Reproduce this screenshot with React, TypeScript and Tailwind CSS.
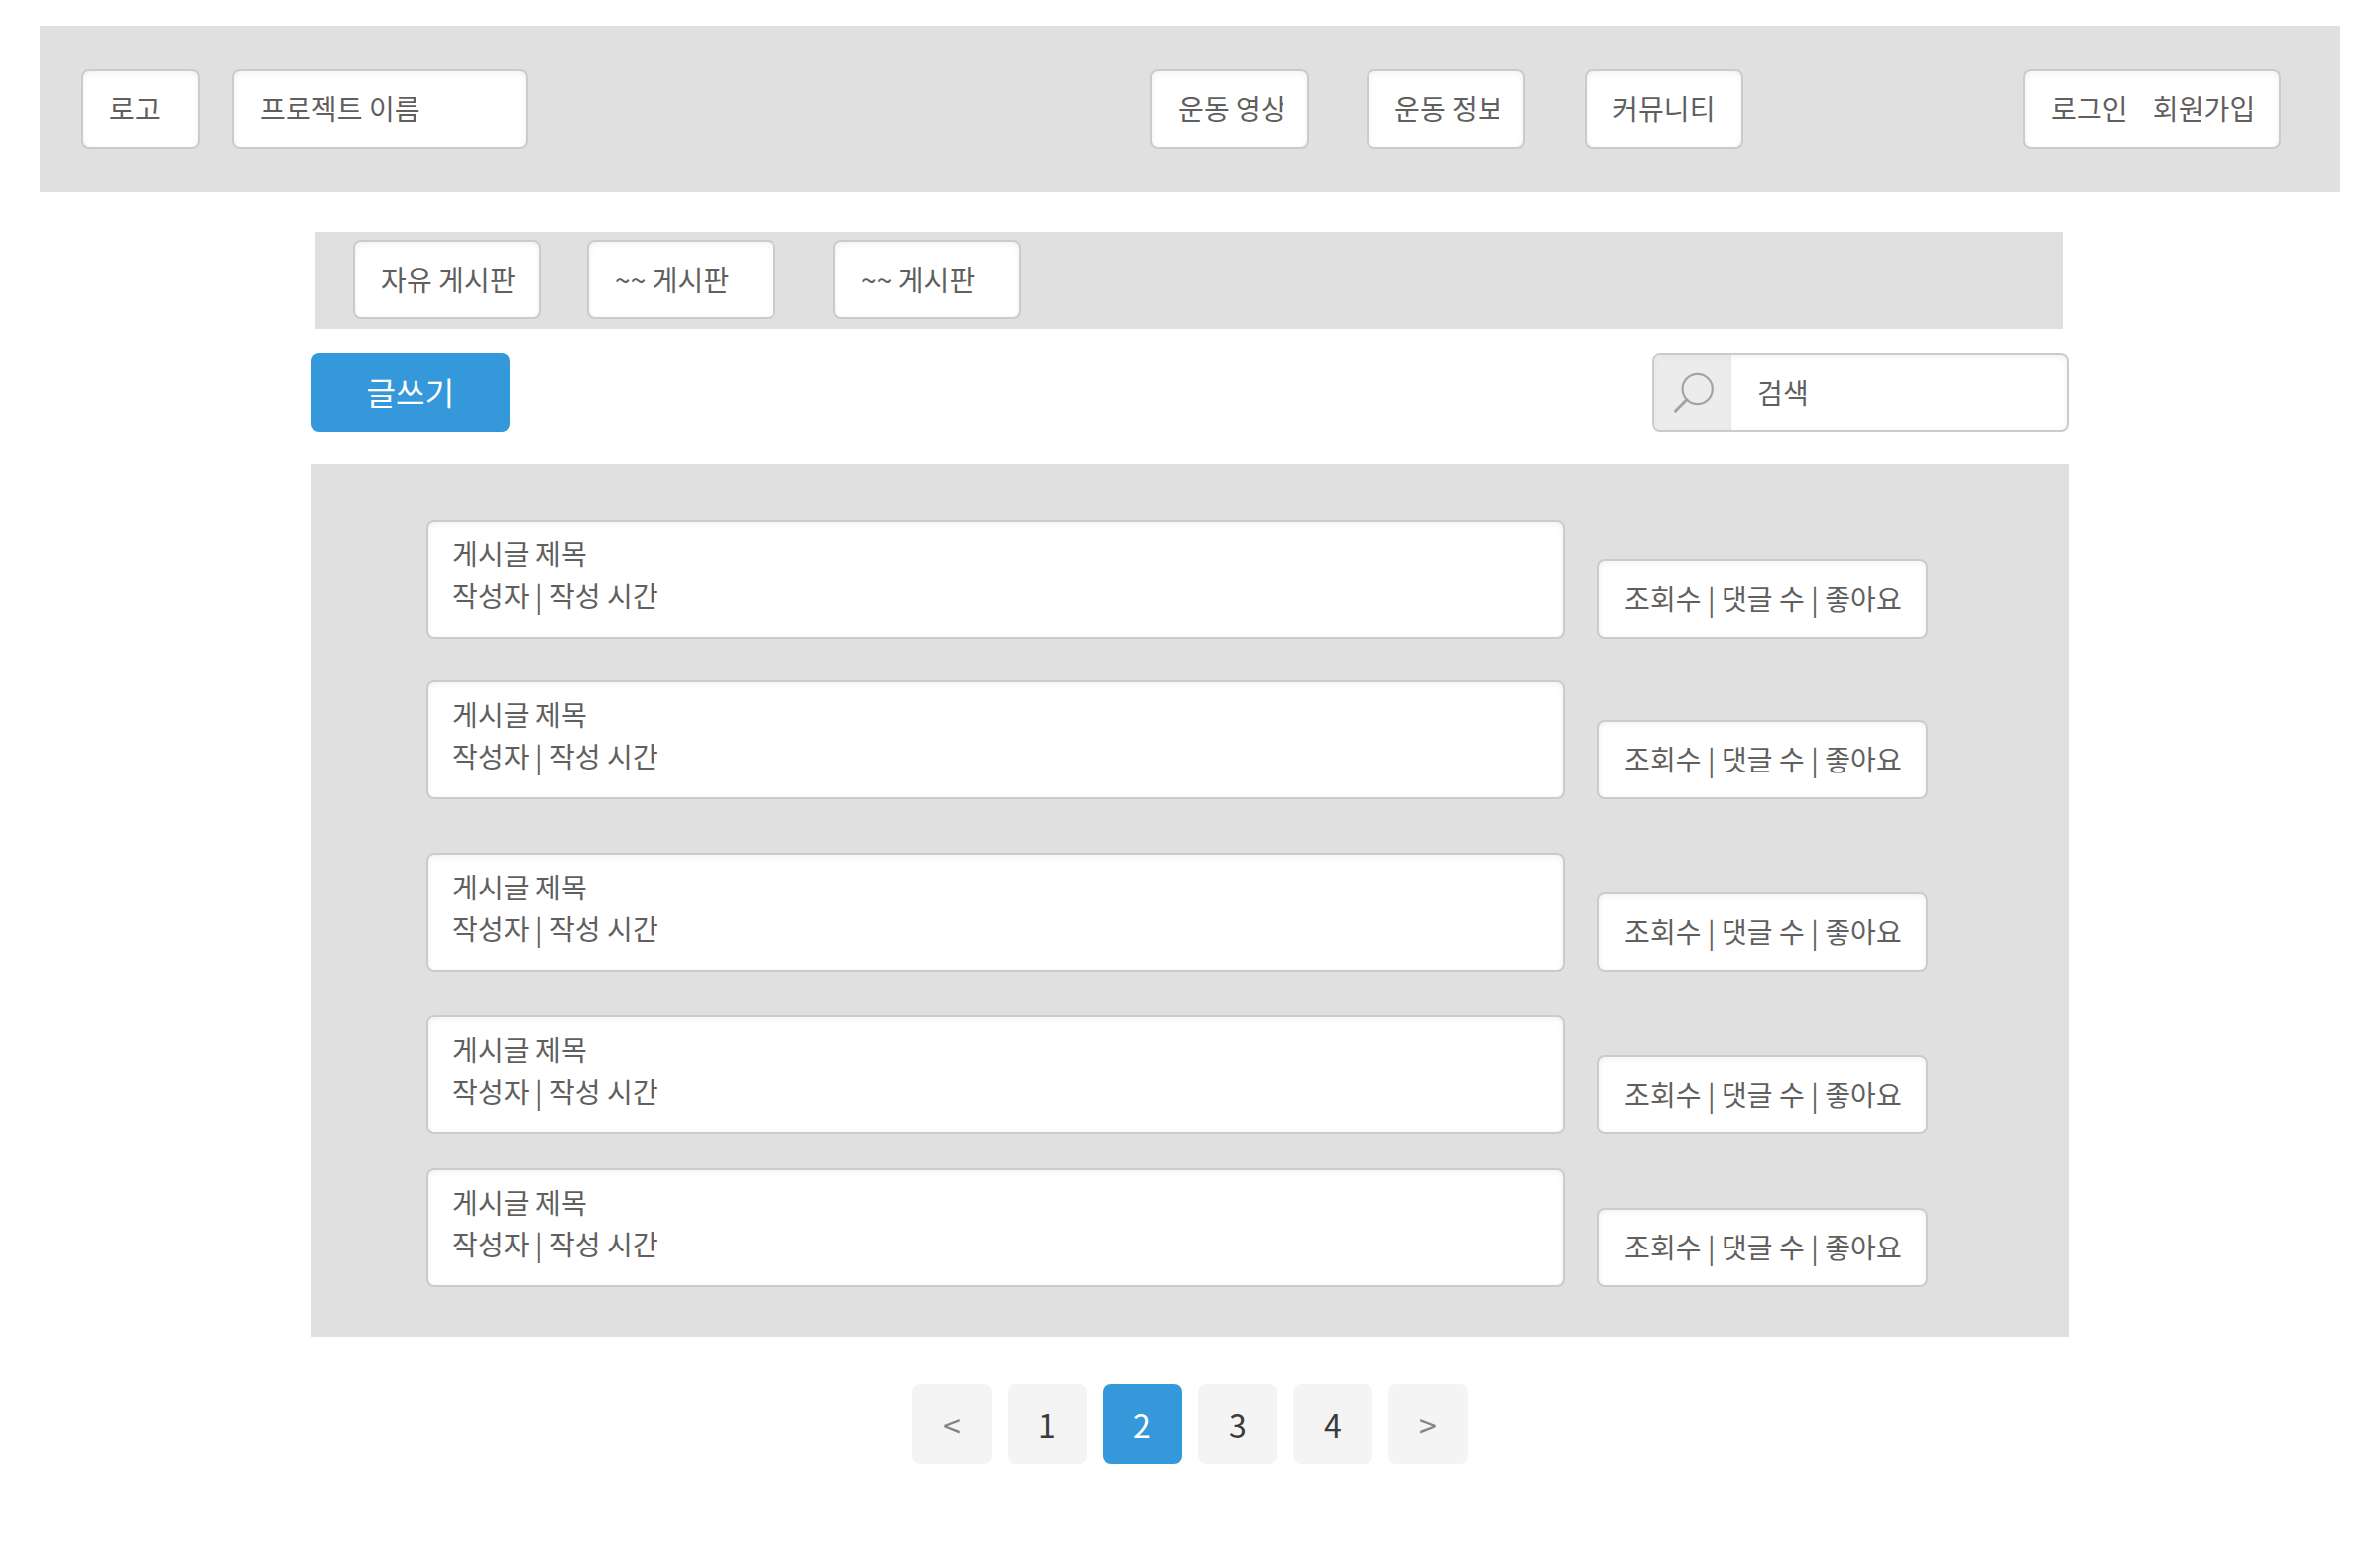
import type { ReactNode } from "react";

const font = "font-['Noto_Sans_CJK_KR','Noto_Sans_CJK_SC',sans-serif]";
const copy = "text-[28px] leading-[42px] tracking-[0.14px] [word-spacing:-1.7px] text-[#5f5f5f]";
const box = "rounded-lg border-2 border-[#cbcbcb] bg-white shadow-[inset_0_2px_6px_rgba(0,0,0,0.06)]";

function Field({ className = "", children }: { className?: string; children: ReactNode }) {
  return (
    <div className={`flex h-20 shrink-0 items-center px-6 pb-[3px] ${box} ${copy} ${className}`}>
      <span className="min-w-0 flex-1 overflow-hidden pl-0.5 whitespace-pre">{children}</span>
    </div>
  );
}

function Header() {
  return (
    <header className="mx-10 flex h-[168px] items-center bg-[#e0e0e0] pr-[60px] pl-[42px]">
      <Field className="w-[120px]">로고</Field>
      <Field className="ml-8 w-[298px]">프로젝트 이름</Field>
      <nav className="ml-auto flex">
        <Field className="w-[160px]">운동 영상</Field>
        <Field className="ml-[58px] w-[160px]">운동 정보</Field>
        <Field className="ml-[60px] w-[160px]">커뮤니티</Field>
      </nav>
      <Field className="ml-[282px] w-[260px]">{"로그인    회원가입"}</Field>
    </header>
  );
}

function Boards() {
  return (
    <nav className="mt-10 ml-[318px] flex h-[98px] w-[1762px] bg-[#e0e0e0] pt-2 pl-[38px]">
      <Field className="w-[190px]">자유 게시판</Field>
      <Field className="ml-[46px] w-[190px]">~~ 게시판</Field>
      <Field className="ml-[58px] w-[190px]">~~ 게시판</Field>
    </nav>
  );
}

function Toolbar() {
  return (
    <div className="mt-6 flex justify-between">
      <button className="h-20 w-[200px] rounded-lg bg-[#3498db] pb-1 text-[32px] leading-[48px] tracking-[0.3px] text-white">
        글쓰기
      </button>
      <div className={`flex h-20 w-[420px] items-center overflow-hidden ${box} ${copy}`}>
        <div className="flex h-full w-[78px] items-center justify-center bg-[#ececec] shadow-[inset_0_2px_6px_rgba(0,0,0,0.04)]">
          <svg width="42" height="42" viewBox="0 0 42 42" fill="none" stroke="#a3a3a3">
            <circle cx="25.7" cy="17" r="15.1" strokeWidth="2.2" />
            <path d="M14.8 27.8 3.4 39.2" strokeWidth="3" strokeLinecap="round" />
          </svg>
        </div>
        <span className="ml-[26px] pb-[3px]">검색</span>
      </div>
    </div>
  );
}

function Post({ className = "" }: { className?: string }) {
  return (
    <article className={`flex items-end ${className}`}>
      <div className={`h-[120px] w-[1148px] px-6 pt-[11px] ${box} ${copy}`}>
        <p>게시글 제목</p>
        <p>작성자 | 작성 시간</p>
      </div>
      <Field className="ml-8 w-[334px]">조회수 | 댓글 수 | 좋아요</Field>
    </article>
  );
}

function Pager() {
  const base = "flex size-20 items-center justify-center rounded-lg";
  return (
    <nav className="mt-12 flex justify-center gap-4 text-[32px] leading-[48px] text-[#3b3b3b]">
      <span className={`${base} bg-[#f4f4f4] text-[#858585]`}>&lt;</span>
      <span className={`${base} bg-[#f4f4f4]`}>1</span>
      <span className={`${base} bg-[#3498db] text-white`}>2</span>
      <span className={`${base} bg-[#f4f4f4]`}>3</span>
      <span className={`${base} bg-[#f4f4f4]`}>4</span>
      <span className={`${base} bg-[#f4f4f4] text-[#858585]`}>&gt;</span>
    </nav>
  );
}

export default function App() {
  return (
    <div lang="ko" className={`h-[1558px] w-[2400px] overflow-hidden bg-white pt-[26px] ${font}`}>
      <Header />
      <Boards />
      <main className="mx-[314px]">
        <Toolbar />
        <section className="mt-8 h-[880px] bg-[#e0e0e0] pt-14 pl-[116px]">
          <Post />
          <Post className="mt-[42px]" />
          <Post className="mt-[54px]" />
          <Post className="mt-11" />
          <Post className="mt-[34px]" />
        </section>
      </main>
      <Pager />
    </div>
  );
}
